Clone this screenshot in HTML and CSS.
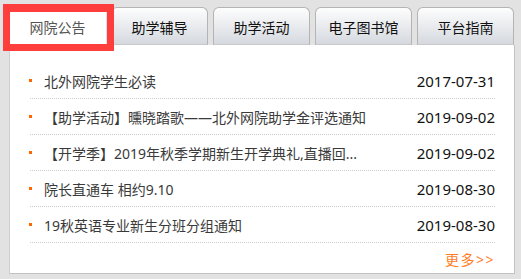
FILE: index.html
```html
<!DOCTYPE html>
<html lang="zh-CN">
<head>
<meta charset="utf-8">
<title>网院公告</title>
<link rel="stylesheet" href="styles.css">
</head>
<body>
<div class="box">
  <div class="tabs">
    <div class="tab active">网院公告</div>
    <div class="tab">助学辅导</div>
    <div class="tab">助学活动</div>
    <div class="tab">电子图书馆</div>
    <div class="tab">平台指南</div>
  </div>
  <div class="panel">
    <ul class="list">
      <li><span class="title">北外网院学生必读</span><span class="date">2017-07-31</span></li>
      <li><span class="title">【助学活动】曛晓踏歌——北外网院助学金评选通知</span><span class="date">2019-09-02</span></li>
      <li><span class="title">【开学季】2019年秋季学期新生开学典礼,直播回...</span><span class="date">2019-09-02</span></li>
      <li><span class="title">院长直通车 相约9.10</span><span class="date">2019-08-30</span></li>
      <li><span class="title">19秋英语专业新生分班分组通知</span><span class="date">2019-08-30</span></li>
    </ul>
    <div class="more"><a href="#">更多&gt;&gt;</a></div>
  </div>
</div>
</body>
</html>
```

FILE: styles.css
```css
html, body {
  margin: 0;
  padding: 0;
}
body {
  background: #e2e2e2;
  font-family: "Noto Sans", "Noto Sans CJK SC", sans-serif;
  font-size: 14px;
  color: #333;
  width: 521px;
  height: 279px;
  overflow: hidden;
}
.box {
  padding: 7px 0 0 9px;
  width: 506px;
}
.tabs {
  display: flex;
  gap: 5px;
  height: 38px;
  position: relative;
  z-index: 1;
}
.tab {
  box-sizing: border-box;
  width: 97px;
  height: 38px;
  border: 1px solid #b4b4b4;
  border-bottom-color: #c8c8c8;
  border-radius: 6px 6px 0 0;
  background: linear-gradient(#fdfdfd, #d5d9df);
  color: #111;
  display: flex;
  align-items: center;
  justify-content: center;
  padding-top: 1px;
}
.tab.active {
  background: #fff;
  color: #555;
  border-color: #fff;
  position: relative;
}
.tab.active::after {
  content: "";
  position: absolute;
  left: -7px;
  top: -4px;
  width: 111px;
  height: 47px;
  box-sizing: border-box;
  border: 7px solid #fe3d3d;
  border-top-width: 8px;
}
.panel {
  box-sizing: border-box;
  width: 506px;
  height: 229px;
  background: #fff;
  border: 1px solid #cfcfcf;
  border-right-color: #c2c2c2;
  border-bottom-color: #c2c2c2;
  border-top: none;
  padding: 18px 19px 0 20px;
}
.list {
  list-style: none;
  margin: 0;
  padding: 0;
}
.list li {
  display: flex;
  justify-content: space-between;
  align-items: center;
  height: 34px;
  border-bottom: 1px dotted #cccccc;
  position: relative;
  padding-left: 14px;
  padding-top: 1px;
}
.list li::before {
  content: "";
  position: absolute;
  left: -1px;
  top: 16px;
  width: 3px;
  height: 3px;
  background: #f60;
}
.title {
  color: #3a3a3a;
}
.date {
  color: #111;
  font-size: 15px;
}
.more {
  text-align: right;
  padding-top: 8px;
  line-height: 18px;
}
.more a {
  color: #ff7d1f;
  text-decoration: none;
  letter-spacing: 1.5px;
}
```
